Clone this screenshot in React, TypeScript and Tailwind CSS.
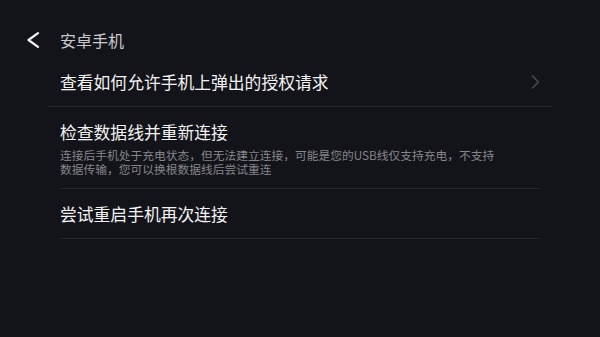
const font = "font-['Noto_Sans_CJK_SC','Noto_Sans',sans-serif]";

function BackIcon() {
  return (
    <svg width="14" height="16" viewBox="0 0 14 16" fill="none" className="shrink-0">
      <polyline
        points="12,1.2 2.5,8 12,14.8"
        stroke="#f2f2f2"
        strokeWidth="2.2"
        strokeLinecap="round"
        strokeLinejoin="round"
      />
    </svg>
  );
}

function Chevron() {
  return (
    <svg width="9" height="14" viewBox="0 0 9 14" fill="none" className="shrink-0">
      <polyline
        points="1.5,1 7.5,7 1.5,13"
        stroke="#4a4b51"
        strokeWidth="1.6"
        strokeLinecap="round"
        strokeLinejoin="round"
      />
    </svg>
  );
}

export default function App() {
  return (
    <div className={`h-[337px] w-[600px] overflow-hidden bg-[#131419] ${font}`}>
      <header className="flex items-center pl-[26px] pt-[29px] pb-[7px]">
        <BackIcon />
        <span className="ml-[20px] text-[16px] leading-[22px] text-[#c9cacd]">安卓手机</span>
      </header>

      <div className="mx-[47px] flex h-[49px] items-center justify-between border-b border-[#25262b] px-[13px]">
        <span className="text-[16.8px] leading-[24px] text-[#f3f3f4]">
          查看如何允许手机上弹出的授权请求
        </span>
        <Chevron />
      </div>

      <div className="mx-[60px] border-b border-[#25262b] pt-[13px] pb-[13px]">
        <p className="text-[16.8px] leading-[24px] text-[#f3f3f4]">检查数据线并重新连接</p>
        <p className="mt-[4px] text-[11.75px] leading-[13.5px] text-[#85868b]">
          <span className="block">
            连接后手机处于充电状态，但无法建立连接，可能是您的USB线仅支持充电，不支持
          </span>
          <span className="block">数据传输，您可以换根数据线后尝试重连</span>
        </p>
      </div>

      <div className="mx-[60px] flex h-[50px] items-center border-b border-[#25262b]">
        <span className="text-[16.8px] leading-[24px] text-[#f3f3f4]">尝试重启手机再次连接</span>
      </div>
    </div>
  );
}
